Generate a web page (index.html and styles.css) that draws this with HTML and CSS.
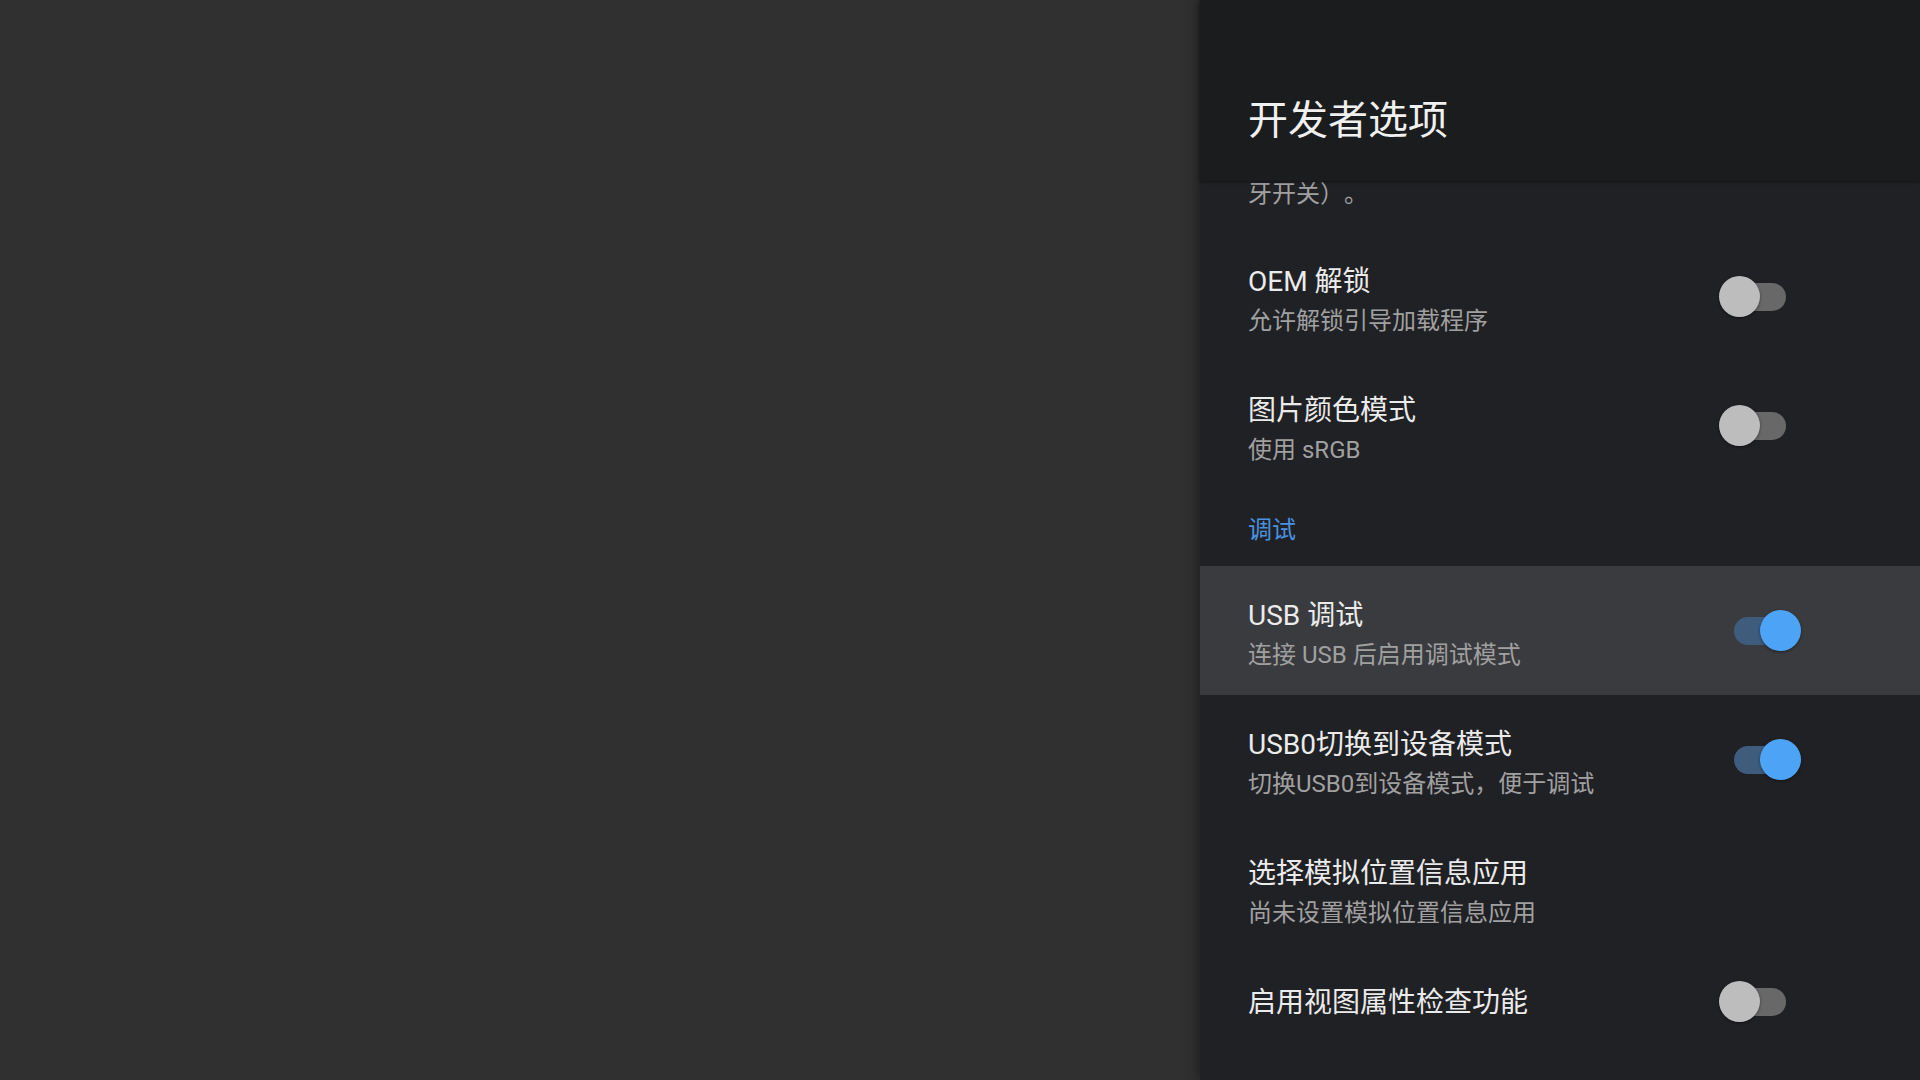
FILE: index.html
```html
<!DOCTYPE html>
<html lang="zh-CN">
<head>
<meta charset="utf-8">
<title>开发者选项</title>
<link rel="stylesheet" href="styles.css">
</head>
<body>
<div class="screen">
  <div class="backdrop"></div>
  <aside class="panel">
    <header class="panel-header">
      <h1 class="panel-title">开发者选项</h1>
    </header>
    <div class="list">
      <div class="partial"><span class="subtitle">牙开关）。</span></div>

      <div class="row">
        <div class="text">
          <div class="title">OEM 解锁</div>
          <div class="subtitle">允许解锁引导加载程序</div>
        </div>
        <div class="switch"><span class="track"></span><span class="thumb"></span></div>
      </div>

      <div class="row">
        <div class="text">
          <div class="title">图片颜色模式</div>
          <div class="subtitle">使用 sRGB</div>
        </div>
        <div class="switch"><span class="track"></span><span class="thumb"></span></div>
      </div>

      <div class="section">调试</div>

      <div class="row focused">
        <div class="text">
          <div class="title">USB 调试</div>
          <div class="subtitle">连接 USB 后启用调试模式</div>
        </div>
        <div class="switch on"><span class="track"></span><span class="thumb"></span></div>
      </div>

      <div class="row">
        <div class="text">
          <div class="title">USB0切换到设备模式</div>
          <div class="subtitle">切换USB0到设备模式，便于调试</div>
        </div>
        <div class="switch on"><span class="track"></span><span class="thumb"></span></div>
      </div>

      <div class="row">
        <div class="text">
          <div class="title">选择模拟位置信息应用</div>
          <div class="subtitle">尚未设置模拟位置信息应用</div>
        </div>
      </div>

      <div class="row single">
        <div class="text">
          <div class="title">启用视图属性检查功能</div>
        </div>
        <div class="switch"><span class="track"></span><span class="thumb"></span></div>
      </div>
    </div>
  </aside>
</div>
</body>
</html>
```

FILE: styles.css
```css
* { box-sizing: border-box; }

html, body {
  margin: 0;
  padding: 0;
  width: 1920px;
  height: 1080px;
  overflow: hidden;
  background: #303030;
  font-family: "Roboto", "Noto Sans CJK SC", sans-serif;
  text-spacing-trim: space-all;
}

.screen {
  display: flex;
  width: 1920px;
  height: 1080px;
}

.backdrop {
  flex: 1;
  background: #303030;
}

.panel {
  width: 720px;
  height: 1080px;
  background: #202125;
  display: flex;
  flex-direction: column;
  box-shadow: -3px 0 10px rgba(0, 0, 0, 0.35);
  position: relative;
  z-index: 1;
}

.panel-header {
  height: 181px;
  flex: 0 0 181px;
  background: #1b1c1e;
  padding: 97px 0 0 48px;
  box-shadow: 0 1px 3px rgba(0, 0, 0, 0.45);
  position: relative;
  z-index: 2;
}

.panel-title {
  margin: 0;
  font-size: 40px;
  line-height: 48px;
  font-weight: 400;
  color: #f0f0f0;
}

.list {
  flex: 1;
  display: flex;
  flex-direction: column;
  overflow: hidden;
}

.partial {
  height: 51px;
  flex: 0 0 51px;
  overflow: hidden;
  display: flex;
  align-items: flex-end;
  padding: 0 0 22px 48px;
}

.row {
  height: 129px;
  flex: 0 0 129px;
  display: flex;
  align-items: center;
  padding: 0 119px 0 48px;
}

.row.single {
  height: 96px;
  flex: 0 0 96px;
}

.row.focused {
  background: #3a3b3f;
}

.text {
  flex: 1;
  align-self: stretch;
  padding-top: 32px;
}

.title {
  font-size: 28px;
  line-height: 36px;
  color: #ebebeb;
  white-space: nowrap;
}

.subtitle {
  font-size: 24px;
  line-height: 42px;
  color: #a0a0a0;
  white-space: nowrap;
}

.partial .subtitle {
  line-height: 32px;
}

.section {
  height: 76px;
  flex: 0 0 76px;
  line-height: 72px;
  padding: 4px 0 0 48px;
  font-size: 24px;
  color: #4a92e0;
}

.switch {
  position: relative;
  width: 82px;
  height: 41px;
  flex: 0 0 82px;
}

.track {
  position: absolute;
  left: 15px;
  top: 7px;
  width: 52px;
  height: 28px;
  border-radius: 14px;
  background: #686868;
}

.thumb {
  position: absolute;
  left: 0;
  top: 0;
  width: 41px;
  height: 41px;
  border-radius: 50%;
  background: #bdbdbd;
  box-shadow: 0 1px 3px rgba(0, 0, 0, 0.45);
}

.switch.on .track {
  background: #3f5c7c;
}

.switch.on .thumb {
  left: 41px;
  background: #4da4f7;
}
```
